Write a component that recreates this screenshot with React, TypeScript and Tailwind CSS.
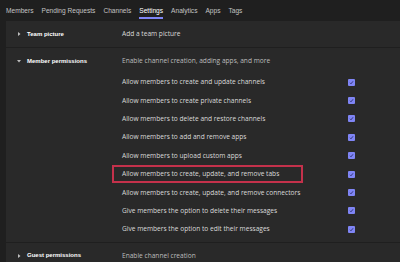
import React from "react"

const tabs = ["Members", "Pending Requests", "Channels", "Settings", "Analytics", "Apps", "Tags"]

const perms = [
  "Allow members to create and update channels",
  "Allow members to create private channels",
  "Allow members to delete and restore channels",
  "Allow members to add and remove apps",
  "Allow members to upload custom apps",
  "Allow members to create, update, and remove tabs",
  "Allow members to create, update, and remove connectors",
  "Give members the option to delete their messages",
  "Give members the option to edit their messages",
]

const body = "text-[6.6px] font-['Open_Sans','Liberation_Sans',sans-serif]"

function Caret({ open }: { open?: boolean }) {
  return (
    <svg width="4" height="4" viewBox="0 0 4 4" className="shrink-0">
      {open ? <path d="M0 1 L4 1 L2 3.5 Z" fill="#bdbdbd" /> : <path d="M1 0 L3.5 2 L1 4 Z" fill="#bdbdbd" />}
    </svg>
  )
}

function Check() {
  return (
    <div className="w-[7px] h-[7px] rounded-[1px] bg-[#7f85f5] flex items-center justify-center">
      <svg width="5" height="5" viewBox="0 0 5 5">
        <path d="M1 2.8 L2 3.8 L4 1.3" stroke="#2b2e6e" strokeWidth="0.9" fill="none" />
      </svg>
    </div>
  )
}

export default function App() {
  return (
    <div className="w-[400px] h-[262px] overflow-hidden bg-[#1f1f1f] text-[#dadada]" style={{ fontFamily: "'Liberation Sans', Arial, sans-serif" }}>
      <div className="h-[21px] flex items-start pl-[6px] gap-[8px] text-[6.6px] text-[#c4c4c4]">
        {tabs.map((t) => (
          <div key={t} className="relative pt-[6px]">
            <span className={t === "Settings" ? "text-white" : ""}>{t}</span>
            {t === "Settings" && <div className="h-[2px] bg-[#7f85f5] mt-[1px]" />}
          </div>
        ))}
      </div>
      <div className="ml-[6px] bg-[#292929]">
        <div className="h-[27px] flex items-center border-b border-[#1f1f1f]">
          <div className="w-[116px] flex items-center gap-[6px] pl-[11px]">
            <Caret />
            <span className="text-[6px] font-bold text-white">Team picture</span>
          </div>
          <span className={body}>Add a team picture</span>
        </div>
        <div className="flex pt-[7px] pb-[3px] border-b border-[#1f1f1f]">
          <div className="w-[116px] flex items-start gap-[6px] pl-[11px] pt-[2px]">
            <div className="pt-[2px]"><Caret open /></div>
            <span className="text-[6px] font-bold text-white">Member permissions</span>
          </div>
          <div className="flex-1 flex flex-col">
            <div className={`h-[12px] text-[#bdbdbd] flex items-center ${body}`}>Enable channel creation, adding apps, and more</div>
            <div className="h-[6px]" />
            {perms.map((p, i) => (
              <div key={p} className="h-[18.4px] flex items-center relative">
                {i === 5 && <div className="absolute left-[-10px] w-[191px] top-0 bottom-0 border-2 border-[#c4314b]" />}
                <span className={`w-[226px] ${body}`}>{p}</span>
                <Check />
              </div>
            ))}
          </div>
        </div>
        <div className="h-[26px] flex items-center">
          <div className="w-[116px] flex items-center gap-[6px] pl-[11px]">
            <Caret />
            <span className="text-[6px] font-bold text-white">Guest permissions</span>
          </div>
          <span className={`text-[#bdbdbd] ${body}`}>Enable channel creation</span>
        </div>
      </div>
    </div>
  )
}
